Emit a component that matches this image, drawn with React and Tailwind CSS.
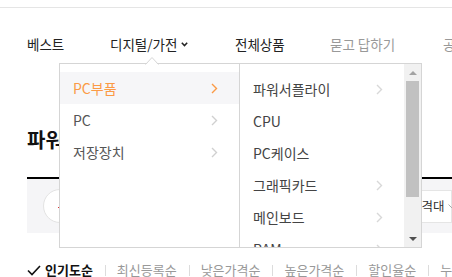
import React from "react";

const Chevron = ({ color = "#cfcfcf" }) => (
  <svg width="7" height="11" viewBox="0 0 7 11" fill="none" className="shrink-0">
    <path d="M1 1 L5.5 5.5 L1 10" stroke={color} strokeWidth="1.4" />
  </svg>
);

const leftItems = [
  { name: "PC부품", active: true },
  { name: "PC" },
  { name: "저장장치" },
];

const rightItems = [
  { name: "파워서플라이", sub: true },
  { name: "CPU" },
  { name: "PC케이스" },
  { name: "그래픽카드", sub: true },
  { name: "메인보드", sub: true },
  { name: "RAM", sub: true },
];

const sorts = ["최신등록순", "낮은가격순", "높은가격순", "할인율순", "누적판매순"];

export default function App() {
  return (
    <div
      className="relative h-[277px] w-[452px] overflow-hidden bg-white"
      style={{ fontFamily: "'Noto Sans CJK KR', 'Noto Sans', sans-serif" }}
    >
      {/* top rule */}
      <div className="h-[7px]" />
      <div className="border-t border-[#e5e5e5]" />

      {/* nav */}
      <div className="flex h-[72px] items-center whitespace-nowrap pl-[27px] text-[13.5px] leading-[18px]">
        <span className="w-[83px] shrink-0 text-[#222]">베스트</span>
        <span className="flex w-[125px] shrink-0 items-center gap-[4px] text-[#222]">
          디지털/가전
          <svg width="7" height="5" viewBox="0 0 7 5" fill="none" className="shrink-0">
            <path d="M0.8 0.8 L3.5 3.6 L6.2 0.8" stroke="#222" strokeWidth="1.5" />
          </svg>
        </span>
        <span className="w-[95px] shrink-0 text-[#222]">전체상품</span>
        <span className="w-[113px] shrink-0 text-[#999]">묻고 답하기</span>
        <span className="shrink-0 text-[#999]">공지사항</span>
      </div>

      {/* page content behind menu */}
      <div className="px-[27px]">
        <div className="mt-[48px] text-[20px] font-bold leading-[24px] text-[#111]">파워서플라이</div>
        <div className="mr-[-27px] mt-[25px] h-[2px] bg-black" />
        <div className="mr-[-27px] flex h-[54px] items-center justify-between bg-[#f5f5f7] pl-[16px]">
          <div className="relative h-[34px] w-[34px] rounded-full border border-[#e3e3e3] bg-white">
            <div className="absolute left-[14px] top-[17px] h-[1px] w-[1px] bg-[#d33]" />
          </div>
          <div className="flex h-[33px] w-[52px] shrink-0 items-center gap-[3px] whitespace-nowrap border border-[#e5e5e5] bg-white pl-[9px] text-[12.5px] text-[#333]">
            가격대
            <svg width="8" height="5" viewBox="0 0 8 5" fill="none" className="shrink-0">
              <path d="M0.5 0.5 L4 4 L7.5 0.5" stroke="#aaa" strokeWidth="1" />
            </svg>
          </div>
        </div>

        {/* sort bar */}
        <div className="mt-[28px] flex items-center whitespace-nowrap text-[13px] leading-[18px]">
          <svg width="14" height="11" viewBox="0 0 14 11" fill="none" className="mr-[4px] shrink-0">
            <path d="M1 5.5 L5 9.5 L13 1" stroke="#111" strokeWidth="1.6" />
          </svg>
          <span className="shrink-0 font-bold text-[#111]">인기도순</span>
          {sorts.map((s) => (
            <React.Fragment key={s}>
              <span className="ml-[12px] mr-[11px] h-[11px] w-px shrink-0 bg-[#dcdcdc]" />
              <span className="shrink-0 text-[#999]">{s}</span>
            </React.Fragment>
          ))}
        </div>
      </div>

      {/* dropdown menu */}
      <div className="absolute left-[59px] top-[63px] flex h-[185px] w-[363px] border border-[#d5d5d5] bg-white text-[14px] leading-none">
        <svg
          width="14"
          height="9"
          viewBox="0 0 14 9"
          className="absolute left-[85px] top-[-8px]"
          fill="none"
        >
          <polygon points="0.5,9 7,2.2 13.5,9" fill="#fff" />
          <path d="M0.5 8.5 L7 1.5 L13.5 8.5" stroke="#d5d5d5" strokeWidth="1" />
        </svg>

        <div className="w-[180px] border-r border-[#d5d5d5] pt-[8px]">
          {leftItems.map((it) => (
            <div
              key={it.name}
              className={`flex h-[32px] items-center justify-between pl-[13px] pr-[21px] ${
                it.active ? "bg-[#f6f6f8] text-[#fb9a45]" : "text-[#555]"
              }`}
            >
              <span>{it.name}</span>
              <Chevron color={it.active ? "#fb9a45" : "#d0d0d0"} />
            </div>
          ))}
        </div>

        <div className="flex flex-1 overflow-hidden">
          <div className="flex-1 pt-[9px]">
            {rightItems.map((it) => (
              <div key={it.name} className="flex h-[32px] items-center justify-between pl-[13px] pr-[21px] text-[#444]">
                <span>{it.name}</span>
                {it.sub && <Chevron color="#d8d8d8" />}
              </div>
            ))}
          </div>
          <div className="flex w-[17px] flex-col bg-[#f1f1f1]">
            <div className="flex h-[17px] items-center justify-center">
              <svg width="8" height="4" viewBox="0 0 8 4">
                <polygon points="0,4 4,0 8,4" fill="#a3a3a3" />
              </svg>
            </div>
            <div className="mx-[2px] h-[116px] bg-[#c1c1c1]" />
            <div className="flex-1" />
            <div className="flex h-[17px] items-center justify-center">
              <svg width="8" height="4" viewBox="0 0 8 4">
                <polygon points="0,0 8,0 4,4" fill="#505050" />
              </svg>
            </div>
          </div>
        </div>
      </div>
    </div>
  );
}
